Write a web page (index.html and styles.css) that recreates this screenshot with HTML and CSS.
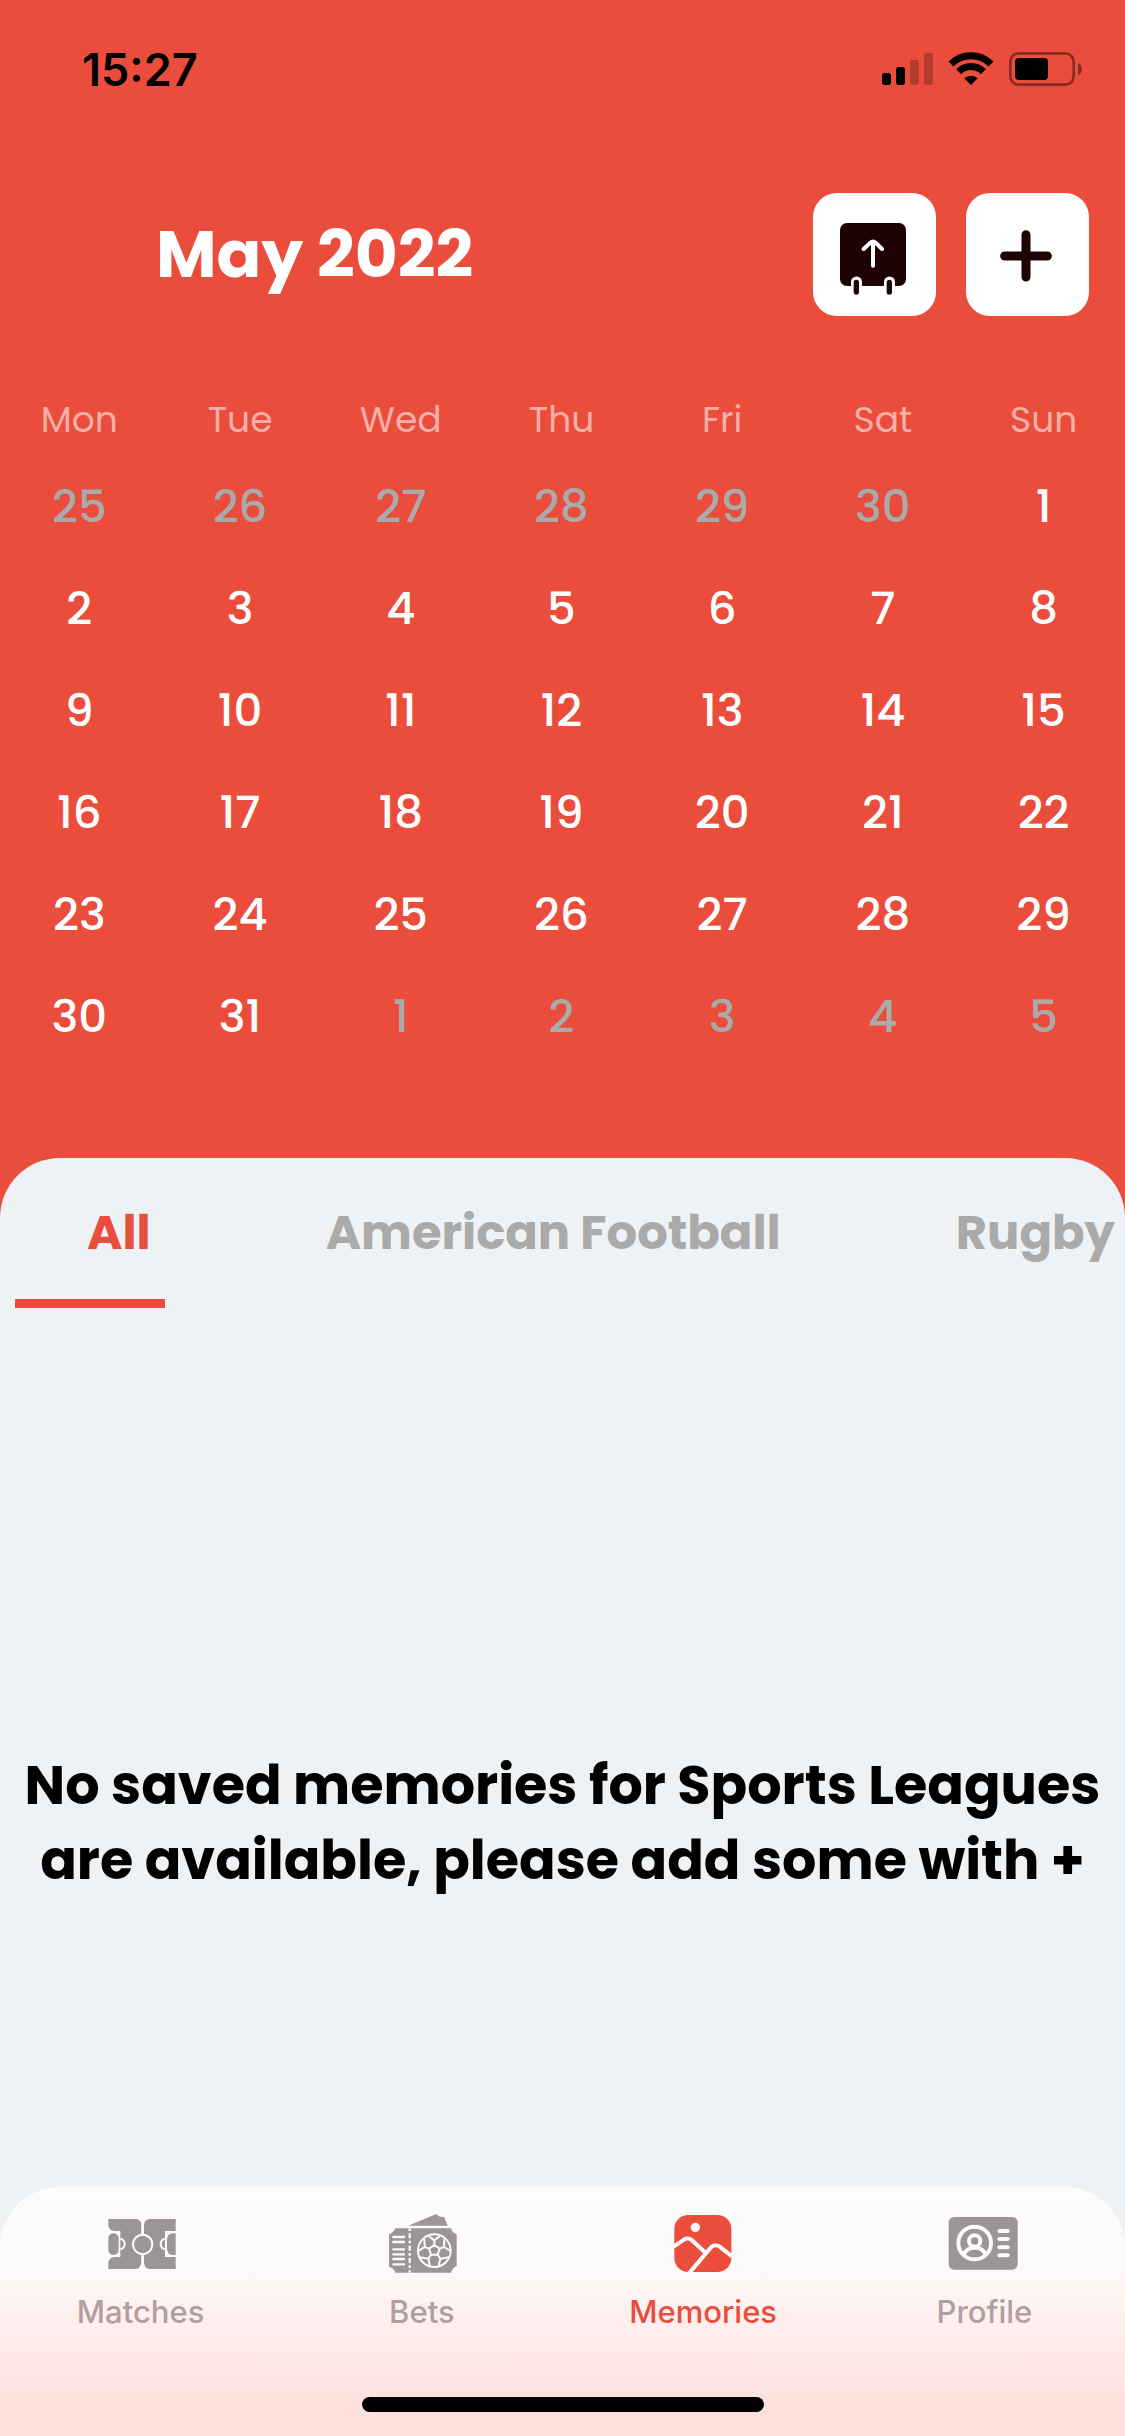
FILE: index.html
```html
<!DOCTYPE html>
<html lang="en">
<head>
<meta charset="utf-8">
<meta name="viewport" content="width=device-width, initial-scale=1">
<title>Memories</title>
<link rel="stylesheet" href="styles.css">
</head>
<body>
<div class="app">
  <div class="status">
    <span class="status-time">15:27</span>
    <svg class="status-icons" viewBox="0 0 600 102" aria-hidden="true">
      <rect x="0" y="63" width="27" height="36" rx="8"/>
      <rect x="42" y="45" width="27" height="54" rx="8"/>
      <g opacity=".22">
        <rect x="84" y="24" width="27" height="75" rx="8"/>
        <rect x="126" y="3" width="27" height="96" rx="8"/>
      </g>
      <g fill="none" stroke="#000" stroke-width="21">
        <path d="M207 36A85 85 0 0 1 327 36"/>
        <path d="M230 59A52 52 0 0 1 304 59"/>
      </g>
      <path d="M267 99L247 79A29 29 0 0 1 287 79Z"/>
      <rect x="385" y="4" width="190" height="94" rx="25" fill="none" stroke="#000" stroke-opacity=".42" stroke-width="8"/>
      <rect x="399" y="18" width="99" height="66" rx="12"/>
      <path d="M588 33Q600 38 600 51T588 69Z" opacity=".42"/>
    </svg>
  </div>

  <header class="header">
    <h1 class="month">May 2022</h1>
    <div class="actions">
      <button class="action" type="button" aria-label="Collapse calendar">
        <svg class="action-icon" viewBox="0 0 369 369" aria-hidden="true">
          <rect x="81" y="90" width="198" height="189" rx="21" fill="#1f0304"/>
          <g fill="none" stroke="#fff" stroke-width="12" stroke-linecap="round" stroke-linejoin="round">
            <path d="M180 218V146M152 168L172 149Q180 142 188 149L207 168"/>
          </g>
          <path d="M114 285V267a16 16 0 0 1 33 0V285ZM213 285V267a16 16 0 0 1 33 0V285Z" fill="#fff"/>
          <path d="M130 268V297M229 268V297" stroke="#1f0304" stroke-width="16" stroke-linecap="round"/>
        </svg>
      </button>
      <button class="action" type="button" aria-label="Add memory">
        <svg class="action-icon" viewBox="0 0 369 369" aria-hidden="true">
          <path d="M180 125V252M116 189H244" stroke="#1f0304" stroke-width="27" stroke-linecap="round"/>
        </svg>
      </button>
    </div>
  </header>

  <table class="calendar">
    <thead>
      <tr><th>Mon</th><th>Tue</th><th>Wed</th><th>Thu</th><th>Fri</th><th>Sat</th><th>Sun</th></tr>
    </thead>
    <tbody>
      <tr><td class="out">25</td><td class="out">26</td><td class="out">27</td><td class="out">28</td><td class="out">29</td><td class="out">30</td><td>1</td></tr>
      <tr><td>2</td><td>3</td><td>4</td><td>5</td><td>6</td><td>7</td><td>8</td></tr>
      <tr><td>9</td><td>10</td><td>11</td><td>12</td><td>13</td><td>14</td><td>15</td></tr>
      <tr><td>16</td><td>17</td><td>18</td><td>19</td><td>20</td><td>21</td><td>22</td></tr>
      <tr><td>23</td><td>24</td><td>25</td><td>26</td><td>27</td><td>28</td><td>29</td></tr>
      <tr><td>30</td><td>31</td><td class="out">1</td><td class="out">2</td><td class="out">3</td><td class="out">4</td><td class="out">5</td></tr>
    </tbody>
  </table>

  <main class="sheet">
    <div class="filters">
      <button class="filter filter-active" type="button">All</button>
      <button class="filter" type="button">American Football</button>
      <button class="filter" type="button">Rugby</button>
    </div>
    <div class="filter-marker"></div>

    <div class="empty">
      <p class="empty-text">No saved memories for Sports Leagues<br>are available, please add some with +</p>
    </div>

    <nav class="tabbar">
      <div class="tabs">
        <a class="tab" href="#matches">
          <svg class="tab-icon" viewBox="0 0 216 198" aria-hidden="true">
            <g fill="#9b9595">
              <path d="M10 27H94Q109 30 109 46V158Q106 175 92 177H10V157Q13 143 28 141H46V63H28Q13 61 10 47Z"/>
              <path d="M212 27H134Q117 30 117 46V158Q119 175 134 177H212V141H180V63H212Z"/>
              <rect x="10" y="70" width="31" height="65" rx="15"/>
              <path d="M212 70H200Q186 74 186 90V116Q188 133 200 135H212Z"/>
            </g>
            <g fill="none" stroke="#fcfafa" stroke-width="6">
              <path d="M46 86Q59 89 59 102T46 118M180 86Q167 89 167 102T180 118"/>
              <path d="M113 27V74M113 132V177"/>
              <circle cx="113" cy="103" r="29" fill="#9b9595"/>
            </g>
          </svg>
          <span>Matches</span>
        </a>
        <a class="tab" href="#bets">
          <svg class="tab-icon" viewBox="0 0 216 198" aria-hidden="true">
            <path d="M67 47L151 12Q155 20 164 20L175 22L185 47Z" fill="#9b9595"/>
            <path d="M28 55H195Q198 68 212 73V168Q200 173 195 188H28Q24 175 9 170V73Q23 69 28 55Z" fill="#9b9595"/>
            <path d="M71 55V188" stroke="#fcfafa" stroke-width="7" stroke-dasharray="8 7 15 7"/>
            <path d="M22 81H54M22 96H54M22 118H54M22 133H54M22 147H54M22 163H54" stroke="#fcfafa" stroke-width="7" stroke-linecap="round"/>
            <g fill="none" stroke="#fcfafa" stroke-width="6" stroke-linejoin="round">
              <circle cx="145" cy="122" r="49"/>
              <path d="M145 105L161 116L155 134H135L129 116Z"/>
              <path d="M145 105V91M161 116L174 111M155 134L163 146M135 134L127 146M129 116L116 111"/>
              <path d="M128 78L145 91L162 78M175 87L174 111L192 122M189 142L163 146L158 168M132 168L127 146L101 142M98 122L116 111L115 87"/>
            </g>
          </svg>
          <span>Bets</span>
        </a>
        <a class="tab tab-active" href="#memories" aria-current="page">
          <svg class="tab-icon" viewBox="0 0 216 198" aria-hidden="true">
            <rect x="22" y="15" width="171" height="171" rx="42" fill="#ea4d3c"/>
            <circle cx="85" cy="52" r="14" fill="#fcfafa"/>
            <path d="M20 110L52 88Q63 82 73 89L114 127M66 190L133 111Q145 101 158 110L195 139" fill="none" stroke="#fcfafa" stroke-width="12"/>
          </svg>
          <span>Memories</span>
        </a>
        <a class="tab" href="#profile">
          <svg class="tab-icon" viewBox="0 0 216 198" aria-hidden="true">
            <rect x="2" y="21" width="207" height="158" rx="16" fill="#9b9595"/>
            <g fill="none" stroke="#fcfafa" stroke-width="12">
              <circle cx="80" cy="99" r="49"/>
              <circle cx="80" cy="93" r="17"/>
              <path d="M47 135Q54 113 80 113T113 135"/>
              <path d="M154 63H179M154 87H179M154 112H179M154 136H179" stroke-linecap="round"/>
            </g>
          </svg>
          <span>Profile</span>
        </a>
      </div>
      <div class="home-indicator"></div>
    </nav>
  </main>
</div>
</body>
</html>
```
FILE: styles.css
```css
* {
  box-sizing: border-box;
}

body {
  margin: 0;
  background: #ea4d3c;
  font-family: Poppins, Inter, "Liberation Sans", sans-serif;
}

button {
  padding: 0;
  border: 0;
  background: none;
  font: inherit;
}

.app {
  display: flex;
  flex-direction: column;
  min-height: 100vh;
}

.status {
  display: flex;
  align-items: center;
  justify-content: space-between;
  height: 138px;
  padding: 0 43px 0 82px;
}

.status-time {
  font-family: Inter, "Liberation Sans", sans-serif;
  font-size: 45px;
  font-weight: 600;
}

.status-icons {
  width: 200px;
  height: 34px;
}

.header {
  display: flex;
  align-items: center;
  justify-content: space-between;
  padding: 55px 36px 0 156px;
}

.month {
  margin: 0;
  color: #fff;
  font-size: 66px;
  font-weight: 700;
}

.actions {
  display: flex;
  gap: 30px;
}

.action {
  width: 123px;
  height: 123px;
  border-radius: 24px;
  background: #fff;
}

.action-icon {
  display: block;
  width: 100%;
}

.calendar {
  width: 100%;
  margin: 76px 0 90px;
  border-collapse: collapse;
  table-layout: fixed;
  color: #fff;
  text-align: center;
}

.calendar th {
  height: 64px;
  padding: 0 2px 8px 0;
  color: #f6b0a8;
  font-size: 36px;
  font-weight: 400;
  line-height: 54px;
}

.calendar td {
  height: 102px;
  padding: 0 2px 0 0;
  font-size: 45px;
  font-weight: 500;
}

.calendar .out {
  color: #aaa;
}

.sheet {
  display: flex;
  flex: 1;
  flex-direction: column;
  border-radius: 60px 60px 0 0;
  background: #eef2f5;
}

.filters {
  display: flex;
  gap: 175px;
  height: 141px;
  padding: 9px 0 0 87px;
  overflow: hidden;
}

.filter {
  flex: none;
  height: 132px;
  color: #aaa;
  font-size: 48px;
  font-weight: 700;
}

.filter-active {
  color: #ea4d3c;
}

.filter-marker {
  width: 150px;
  height: 9px;
  margin-left: 15px;
  background: #ea4d3c;
}

.empty {
  display: flex;
  flex: 1;
  align-items: center;
  justify-content: center;
  padding-top: 150px;
}

.empty-text {
  margin: 0;
  font-size: 54px;
  font-weight: 700;
  line-height: 75px;
  text-align: center;
}

.tabbar {
  padding: 23px 0 24px;
  border-radius: 60px 60px 0 0;
  background: linear-gradient(#fbfcfb, #fcfafa 32%, #feebe9 62%, #fee0dc 88%, #fedfdb);
}

.tabs {
  display: grid;
  grid-template-columns: repeat(4, 1fr);
}

.tab {
  display: flex;
  flex-direction: column;
  align-items: center;
  gap: 16px;
  color: #b39e9d;
  font-family: Inter, "Liberation Sans", sans-serif;
  font-size: 31px;
  font-weight: 500;
  line-height: 40px;
  text-decoration: none;
}

.tab-active {
  color: #ea4d3c;
}

.tab-icon {
  width: 72px;
  height: 66px;
}

.home-indicator {
  width: 402px;
  height: 15px;
  margin: 65px auto 0;
  border-radius: 8px;
  background: #000;
}
```
